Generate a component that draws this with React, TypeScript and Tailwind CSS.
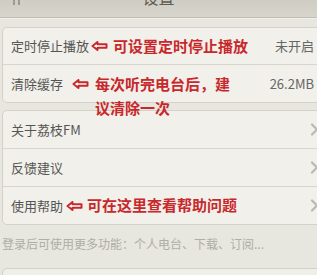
import React from "react";

const font = { fontFamily: '"Noto Sans CJK SC", "Noto Sans", sans-serif' };

function Arrow() {
  return (
    <svg width="17" height="10" viewBox="0 0 17 10" className="shrink-0">
      <path d="M1.5 5 L6.5 1 L6.5 3.2 L15.5 3.2 L15.5 6.8 L6.5 6.8 L6.5 9 Z" fill="#fff" stroke="#c8282c" strokeWidth="2" strokeLinejoin="round" />
    </svg>
  );
}

function Chevron() {
  return (
    <svg width="9" height="13" viewBox="0 0 9 13" className="shrink-0">
      <path d="M2 1.5 L7 6.5 L2 11.5" fill="none" stroke="#b9b8b2" strokeWidth="2.2" strokeLinecap="round" />
    </svg>
  );
}

export default function App() {
  return (
    <div className="w-[317px] h-[275px] overflow-hidden bg-[#e8e7df] text-[13px]" style={font}>
      <div className="relative h-[18px] overflow-hidden bg-gradient-to-b from-[#cfcdc3] to-[#d8d6cc] border-b border-[#bfbdb3] flex justify-center">
        <div className="absolute left-[13px] top-0 flex gap-[3px]">
          <div className="w-[2px] h-[5px] bg-[#9c9a92]" />
          <div className="w-[2px] h-[5px] bg-[#9c9a92]" />
        </div>
        <div className="mt-[-11px] text-[16px] leading-[16px] text-[#5e5c56]">设置</div>
      </div>
      <div className="h-px bg-[#f2f1ea]" />
      <div className="pt-[8px] pl-[2px] mr-[-8px]">
        <div className="rounded-[5px] border border-[#d3d1c8] bg-[#f1f0ea]">
          <div className="h-[37px] flex items-center pl-[8px] pr-[10px] border-b border-[#d7d5cc]">
            <span className="text-[#555]">定时停止播放</span>
            <span className="ml-[2px]"><Arrow /></span>
            <span className="ml-[5px] text-[15px] font-bold text-[#c8282c]">可设置定时停止播放</span>
            <span className="ml-auto text-[#666]">未开启</span>
          </div>
          <div className="h-[37px] flex items-center pl-[8px] pr-[10px]">
            <span className="text-[#555]">清除缓存</span>
            <span className="ml-[9px]"><Arrow /></span>
            <div className="relative z-10 ml-[6px] w-[138px] h-[24px] text-[15px] leading-[24px] font-bold text-[#c8282c]">
              每次听完电台后，建议清除一次
            </div>
            <span className="ml-auto text-[#666]">26.2MB</span>
          </div>
        </div>
        <div className="mt-[7px] rounded-[5px] border border-[#d3d1c8] bg-[#f1f0ea]">
          <div className="h-[38px] flex items-center pl-[8px] pr-[5px] border-b border-[#d7d5cc]">
            <span className="text-[#555]">关于荔枝FM</span>
            <span className="ml-auto"><Chevron /></span>
          </div>
          <div className="h-[38px] flex items-center pl-[8px] pr-[5px] border-b border-[#d7d5cc]">
            <span className="text-[#555]">反馈建议</span>
            <span className="ml-auto"><Chevron /></span>
          </div>
          <div className="h-[37px] flex items-center pl-[8px] pr-[5px]">
            <span className="text-[#555]">使用帮助</span>
            <span className="ml-[3px]"><Arrow /></span>
            <span className="ml-[4px] text-[15px] font-bold text-[#c8282c]">可在这里查看帮助问题</span>
            <span className="ml-auto"><Chevron /></span>
          </div>
        </div>
        <div className="mt-[9px] text-[12px] leading-[20px] text-[#aeada6]">登录后可使用更多功能：个人电台、下载、订阅...</div>
        <div className="mt-[14px] h-[30px] rounded-[5px] border border-[#d3d1c8] bg-[#efeee7]" />
      </div>
    </div>
  );
}
